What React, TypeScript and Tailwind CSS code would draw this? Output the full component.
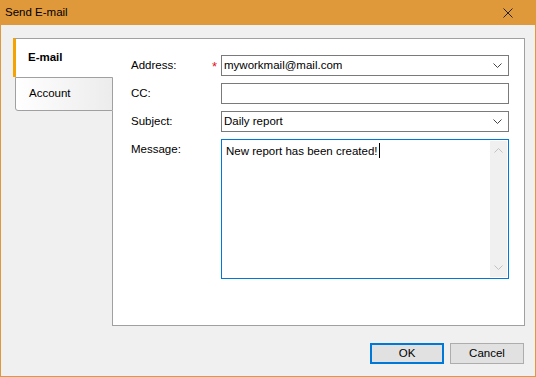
import React from 'react';

function Chevron({ up = false, className = '' }: { up?: boolean; className?: string }) {
  return (
    <svg width="9" height="5" viewBox="0 0 9 5" className={className}>
      <path d={up ? 'M0.5 4.5 L4.5 0.5 L8.5 4.5' : 'M0.5 0.5 L4.5 4.5 L8.5 0.5'} fill="none" stroke="currentColor" strokeWidth="1" />
    </svg>
  );
}

function Field({ value, dropdown = false }: { value: string; dropdown?: boolean }) {
  return (
    <div className="h-[21px] w-[288px] border border-[#7a7a7a] bg-white flex items-center pl-[2px] pr-[6px]">
      <span className="flex-1 leading-none">{value}</span>
      {dropdown && <Chevron className="text-[#444]" />}
    </div>
  );
}

function Row({ label, required = false, children }: { label: string; required?: boolean; children: React.ReactNode }) {
  return (
    <div className="flex items-start">
      <div className="w-[90px] h-[21px] flex items-center relative">
        <span>{label}</span>
        {required && <span className="absolute left-[81px] top-[2px] text-[#e81123] text-[13px]">*</span>}
      </div>
      {children}
    </div>
  );
}

export default function App() {
  return (
    <div
      className="w-[536px] h-[377px] bg-[#e0993a] px-px pb-px flex flex-col text-[11.5px] text-black"
      style={{ fontFamily: '"Liberation Sans", Arial, sans-serif' }}
    >
      <div className="h-[25px] flex items-center pl-[4px] pr-[22px]">
        <span className="flex-1">Send E-mail</span>
        <svg width="10" height="10" viewBox="0 0 10 10">
          <path d="M0.5 0.5 L9.5 9.5 M9.5 0.5 L0.5 9.5" stroke="#222" strokeWidth="1" />
        </svg>
      </div>

      <div className="flex-1 bg-[#f0f0f0] flex flex-col">
        <div className="flex mt-[13px] ml-[12px] mr-[10px] h-[288px]">
          {/* tabs */}
          <div className="w-[100px] flex flex-col">
            <div className="h-[39px] bg-white border-t border-[#a0a0a0] border-l-[3px] border-l-[#f5a300] flex items-center pl-[12px] font-bold">
              E-mail
            </div>
            <div className="h-[34px] ml-[2px] border border-[#a0a0a0] rounded-bl-[3px] bg-gradient-to-r from-white to-[#ececec] flex items-center pl-[13px]">
              Account
            </div>
            <div className="flex-1 border-r border-[#a0a0a0]" />
          </div>

          {/* content */}
          <div className="flex-1 bg-white border-t border-r border-b border-[#a0a0a0] pt-[16px] pl-[18px] flex flex-col gap-[7px]">
            <Row label="Address:" required>
              <Field value="myworkmail@mail.com" dropdown />
            </Row>
            <Row label="CC:">
              <Field value="" />
            </Row>
            <Row label="Subject:">
              <Field value="Daily report" dropdown />
            </Row>
            <Row label="Message:">
              <div className="w-[288px] h-[140px] border border-[#0078d7] bg-white flex">
                <div className="flex-1 pl-[4px] pt-[3px] leading-[16px]">
                  New report has been created!
                  <span className="inline-block w-px h-[15px] bg-black align-[-3px] ml-px" />
                </div>
                <div className="w-[17px] bg-[#f0f0f0] flex flex-col items-center justify-between py-[7px] text-[#c2c2c2] mr-px my-px">
                  <Chevron up />
                  <Chevron />
                </div>
              </div>
            </Row>
          </div>
        </div>

        <div className="flex justify-end gap-[6px] mt-[17px] mr-[11px]">
          <button className="w-[74px] h-[21px] border-2 border-[#0078d7] bg-[#e1e1e1] flex items-center justify-center">
            OK
          </button>
          <button className="w-[74px] h-[21px] border border-[#adadad] bg-[#e1e1e1] flex items-center justify-center">
            Cancel
          </button>
        </div>
      </div>
    </div>
  );
}
